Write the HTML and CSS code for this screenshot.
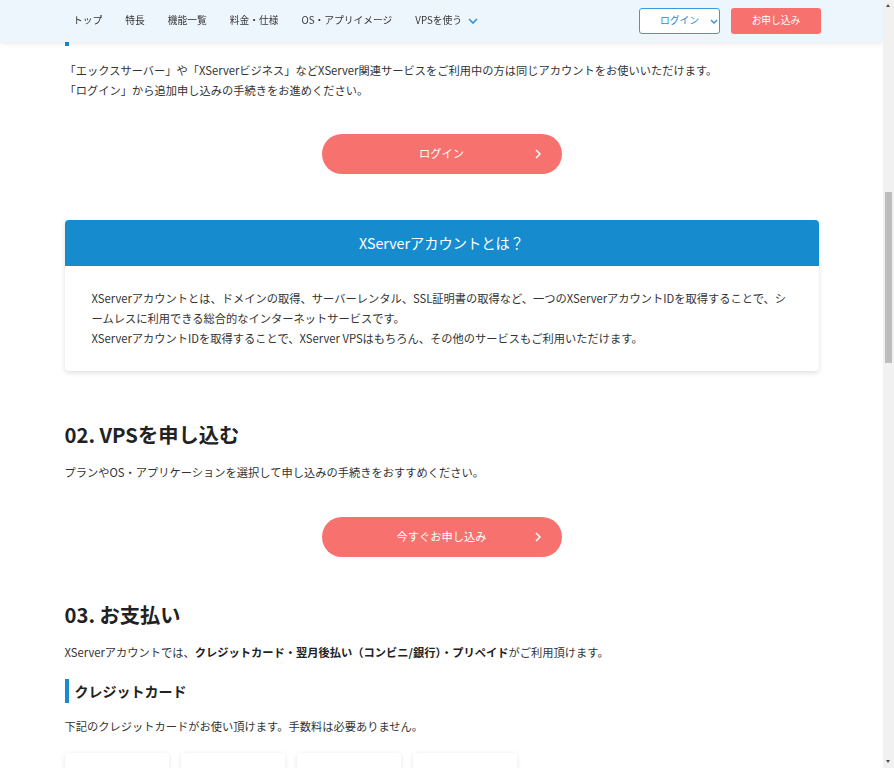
FILE: index.html
```html
<!DOCTYPE html>
<html lang="ja">
<head>
    <meta charset="UTF-8">
    <meta name="viewport" content="width=device-width, initial-scale=1.0">
    <title>お申し込みの流れ | XServer VPS</title>
    <link rel="stylesheet" href="styles.css">
</head>
<body>
    <header class="site-header">
        <nav class="global-nav">
            <a href="#">トップ</a>
            <a href="#">特長</a>
            <a href="#">機能一覧</a>
            <a href="#">料金・仕様</a>
            <a href="#">OS・アプリイメージ</a>
            <a href="#" class="has-sub">VPSを使う
                <svg width="10" height="6" viewBox="0 0 10 6"><path d="M1 1l4 4 4-4" fill="none" stroke="#2b92d8" stroke-width="1.6"/></svg>
            </a>
        </nav>
        <div class="header-actions">
            <a href="#" class="btn-login">ログイン
                <svg width="8" height="5" viewBox="0 0 8 5"><path d="M1 1l3 3 3-3" fill="none" stroke="#2b92d8" stroke-width="1.3"/></svg>
            </a>
            <a href="#" class="btn-apply">お申し込み</a>
        </div>
    </header>

    <main class="container">
        <h3 class="sub-heading">すでにXServerアカウントをお持ちの方</h3>
        <p>「エックスサーバー」や「XServerビジネス」などXServer関連サービスをご利用中の方は同じアカウントをお使いいただけます。<br>
            「ログイン」から追加申し込みの手続きをお進めください。</p>

        <div class="btn-wrap">
            <a href="#" class="btn-round">ログイン
                <svg class="arrow" width="6" height="10" viewBox="0 0 6 10"><path d="M1 1l4 4-4 4" fill="none" stroke="#fff" stroke-width="1.5"/></svg>
            </a>
        </div>

        <div class="info-box">
            <div class="info-box-title">XServerアカウントとは？</div>
            <div class="info-box-body">
                <p>XServerアカウントとは、ドメインの取得、サーバーレンタル、SSL証明書の取得など、一つのXServerアカウントIDを取得することで、シームレスに利用できる総合的なインターネットサービスです。<br>
                    XServerアカウントIDを取得することで、XServer VPSはもちろん、その他のサービスもご利用いただけます。</p>
            </div>
        </div>

        <section class="step">
            <h2>02. VPSを申し込む</h2>
            <p>プランやOS・アプリケーションを選択して申し込みの手続きをおすすめください。</p>
            <div class="btn-wrap">
                <a href="#" class="btn-round">今すぐお申し込み
                    <svg class="arrow" width="6" height="10" viewBox="0 0 6 10"><path d="M1 1l4 4-4 4" fill="none" stroke="#fff" stroke-width="1.5"/></svg>
                </a>
            </div>
        </section>

        <section class="step">
            <h2>03. お支払い</h2>
            <p>XServerアカウントでは、<strong>クレジットカード・翌月後払い（コンビニ/銀行）・プリペイド</strong>がご利用頂けます。</p>
            <h3 class="sub-heading payment">クレジットカード</h3>
            <p>下記のクレジットカードがお使い頂けます。手数料は必要ありません。</p>
            <div class="card-list">
                <div class="card-item"></div>
                <div class="card-item"></div>
                <div class="card-item"></div>
                <div class="card-item"></div>
            </div>
        </section>
    </main>

    <!-- window scrollbar as seen in the capture -->
    <div class="fake-scrollbar" aria-hidden="true">
        <span class="sb-up"></span>
        <span class="sb-thumb"></span>
        <span class="sb-down"></span>
    </div>
</body>
</html>
```

FILE: styles.css
```css
* {
    box-sizing: border-box;
}

body {
    margin: 0;
    padding-right: 11px;
    font-family: "Noto Sans CJK JP", "Noto Sans", sans-serif;
    font-size: 11.25px;
    line-height: 1.8;
    color: #333;
    background-color: #fff;
}

a {
    text-decoration: none;
}

p {
    margin: 0;
}

/* header */
.site-header {
    position: fixed;
    top: 0;
    left: 0;
    right: 11px;
    height: 42px;
    padding: 0 62px 0 73px;
    display: flex;
    align-items: center;
    background-color: #eef6fd;
    box-shadow: 0 2px 5px rgba(0, 0, 0, 0.08);
    z-index: 10;
}

.global-nav {
    display: flex;
    align-items: center;
    gap: 23px;
}

.global-nav a {
    color: #333;
    font-size: 9.75px;
    white-space: nowrap;
}

.global-nav .has-sub {
    display: flex;
    align-items: center;
    gap: 6px;
}

.header-actions {
    margin-left: auto;
    display: flex;
    gap: 11px;
}

.btn-login {
    width: 81px;
    height: 26px;
    padding-left: 20px;
    display: flex;
    align-items: center;
    gap: 11px;
    border: 1px solid #3a9bdb;
    border-radius: 3px;
    background-color: #fff;
    color: #1f8bd2;
    font-size: 9.75px;
    white-space: nowrap;
}

.btn-apply {
    width: 90px;
    height: 26px;
    display: flex;
    align-items: center;
    justify-content: center;
    border-radius: 3px;
    background-color: #f7726f;
    color: #fff;
    font-size: 9.75px;
    white-space: nowrap;
}

/* content */
.container {
    max-width: 754px;
    margin: 0 auto;
    padding: 22px 0 240px;
}

.sub-heading {
    margin: 0 0 14px;
    padding-left: 6px;
    border-left: 4px solid #1a8bd0;
    font-size: 14px;
    line-height: 24px;
    font-weight: 700;
    color: #222;
}

.sub-heading.payment {
    margin-top: 17px;
    margin-bottom: 13px;
}

.btn-wrap {
    display: flex;
    justify-content: center;
    margin: 33px 0 46px;
}

.btn-round {
    position: relative;
    width: 240px;
    height: 40px;
    display: flex;
    align-items: center;
    justify-content: center;
    border-radius: 20px;
    background-color: #f7726f;
    color: #fff;
}

.btn-round .arrow {
    position: absolute;
    right: 21px;
    top: 15px;
}

.info-box {
    border-radius: 4px;
    background-color: #fff;
    box-shadow: 0 2px 5px rgba(0, 0, 0, 0.12);
    overflow: hidden;
}

.info-box-title {
    height: 46px;
    line-height: 46px;
    text-align: center;
    font-size: 14.25px;
    color: #fff;
    background-color: #168ccf;
}

.info-box-body {
    padding: 22px 27px 23px;
}

.step {
    margin-top: 49px;
}

.step + .step {
    margin-top: 43px;
}

.step h2 {
    margin: 0 0 12px;
    font-size: 20.25px;
    line-height: 30px;
    font-weight: 700;
    color: #222;
}

.step .btn-wrap {
    margin: 34px 0 0;
}

.step strong {
    font-weight: 700;
    color: #222;
}

.card-list {
    display: grid;
    grid-template-columns: repeat(4, 104px);
    gap: 12px;
    margin-top: 17px;
}

.card-item {
    height: 80px;
    border-radius: 3px;
    background-color: #fff;
    box-shadow: 0 1px 5px rgba(0, 0, 0, 0.1);
}

/* scrollbar */
.fake-scrollbar {
    position: fixed;
    top: 0;
    right: 0;
    width: 11px;
    height: 100vh;
    background-color: #f1f1f1;
    z-index: 20;
}

.sb-thumb {
    position: absolute;
    top: 192px;
    left: 2px;
    width: 7px;
    height: 171px;
    background-color: #bdbdbd;
}

.sb-up,
.sb-down {
    position: absolute;
    left: 3px;
    width: 0;
    height: 0;
    border-left: 2.5px solid transparent;
    border-right: 2.5px solid transparent;
}

.sb-up {
    top: 4px;
    border-bottom: 3px solid #505050;
}

.sb-down {
    bottom: 5px;
    border-top: 3px solid #505050;
}
```
